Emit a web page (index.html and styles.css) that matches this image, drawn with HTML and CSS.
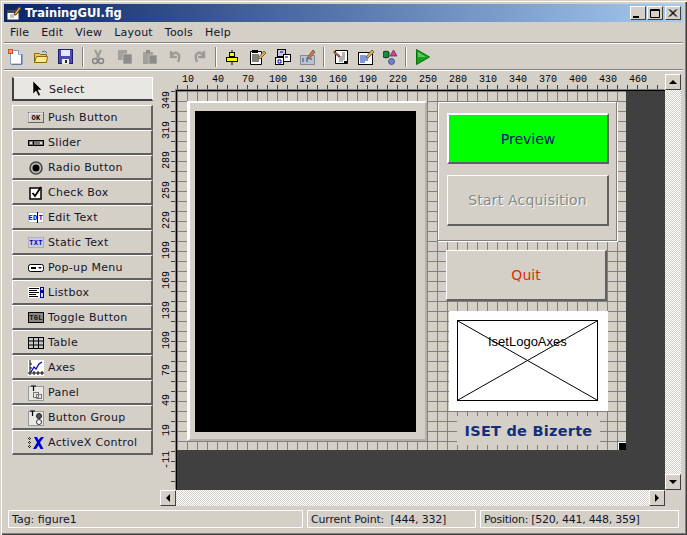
FILE: index.html
```html
<!DOCTYPE html>
<html lang="en">
<head>
  <meta charset="UTF-8" />
  <title>TrainingGUI.fig</title>
  <meta name="viewport" content="width=device-width, initial-scale=1.0" />
  <link rel="stylesheet" href="styles.css">
</head>
<body>
<div class="window">

  <!-- Title bar -->
  <div class="titlebar">
    <svg class="app-icon" width="16" height="16" viewBox="0 0 16 16">
      <rect x="1" y="5" width="12" height="10" fill="#fff" stroke="#333"/>
      <rect x="1" y="5" width="12" height="3" fill="#445"/>
      <path d="M4 10h6M4 12h4" stroke="#88a"/>
      <path d="M8 9 13 2l2 1-5 7z" fill="#e8b040" stroke="#642"/>
    </svg>
    <span class="title">TrainingGUI.fig</span>
    <div class="win-btns">
      <div class="win-btn"><svg width="15" height="13"><rect x="3" y="9" width="6" height="2" fill="#000"/></svg></div>
      <div class="win-btn"><svg width="16" height="13"><path d="M3.5 2.5h9v8h-9z M3 3.5h10" fill="none" stroke="#000"/></svg></div>
      <div class="win-btn close"><svg width="16" height="13"><path d="M4 2.5l7 7M5 2.5l7 7M11 2.5l-7 7M12 2.5l-7 7" stroke="#000"/></svg></div>
    </div>
  </div>

  <!-- Menu -->
  <div class="menubar">
    <span>File</span><span>Edit</span><span>View</span><span>Layout</span><span>Tools</span><span>Help</span>
  </div>

  <!-- Toolbar -->
  <div class="toolbar">
    <div class="tool"><svg width="16" height="16"><path d="M2.500 1.500h8l4 4v9.500h-12z" fill="#fff" stroke="#8aa0c8"/><path d="M10.500 1.500v4h4" fill="#dde6f5" stroke="#8aa0c8"/><path d="M13.500 6v9.500h-10" fill="none" stroke="#5a78b0"/><rect x="0.500" y="0.500" width="4" height="4" fill="#f4a070" stroke="#d05030"/></svg></div>
    <div class="tool"><svg width="16" height="16"><path d="M1.500 4.500h5l1 1h6v8h-12z" fill="#f0c850" stroke="#8a6a10"/><path d="M1.500 13.500l2-6h11l-1 6z" fill="#ffe88a" stroke="#8a6a10"/><path d="M9 3q3-2.500 5 1" fill="none" stroke="#3a6ab0"/></svg></div>
    <div class="tool"><svg width="16" height="16"><rect x="0.500" y="0.500" width="14" height="14" fill="#4a4ab0" stroke="#20206a"/><rect x="3" y="1" width="9" height="6" fill="#e8e8f8"/><rect x="4" y="10" width="7" height="5" fill="#eee"/><rect x="7" y="11" width="2" height="3" fill="#222"/></svg></div>
    <div class="tool-sep"></div>
    <div class="tool"><svg width="16" height="16"><path d="M3 1l4 8M9 1l-4 8" stroke="#9a9a96" stroke-width="2"/><circle cx="3" cy="12" r="2.500" fill="none" stroke="#858581" stroke-width="1.500"/><circle cx="9" cy="12" r="2.500" fill="none" stroke="#858581" stroke-width="1.500"/></svg></div>
    <div class="tool"><svg width="16" height="16"><rect x="1" y="1" width="9" height="10" fill="#a3a19c"/><rect x="6" y="5" width="9" height="10" fill="#8e8c88" stroke="#d4d0c8" stroke-width=".6"/></svg></div>
    <div class="tool"><svg width="16" height="16"><rect x="1" y="3" width="10" height="12" fill="#a3a19c"/><rect x="4" y="1" width="4" height="3" fill="#8e8c88"/><rect x="7" y="6" width="8" height="9" fill="#8e8c88" stroke="#d4d0c8" stroke-width=".6"/></svg></div>
    <div class="tool"><svg width="16" height="16"><path d="M4 2v6h6M4 8q2-5 6-4 4 2 1 9" fill="none" stroke="#9c9a96" stroke-width="2.400"/></svg></div>
    <div class="tool"><svg width="16" height="16"><path d="M12 2v6H6M12 8q-2-5-6-4-4 2-1 9" fill="none" stroke="#9c9a96" stroke-width="2.400"/></svg></div>
    <div class="tool-sep tight"></div>
    <div class="tool"><svg width="16" height="16"><path d="M7 1v15" stroke="#000"/><rect x="4.500" y="3.500" width="5" height="4" fill="#ff0" stroke="#000"/><rect x="1.500" y="8.500" width="11" height="4" fill="#ff0" stroke="#000"/></svg></div>
    <div class="tool"><svg width="16" height="16"><path d="M0.500 2.500h11v13h-11z" fill="#fff" stroke="#000"/><rect x="2" y="1" width="6" height="3" fill="#000"/><path d="M2 6h7M2 8h7M2 10h7M2 12h7" stroke="#000"/><path d="M8 9l6-7 2 2-6 6z" fill="#e8b040" stroke="#664"/></svg></div>
    <div class="tool"><svg width="16" height="16"><rect x="0.500" y="8.500" width="8" height="7" fill="#fff" stroke="#000"/><rect x="2.500" y="0.500" width="8" height="7" fill="#c8c8d8" stroke="#000"/><rect x="8.500" y="5.500" width="7" height="7" fill="#fff" stroke="#000"/><path d="M3 11h3v3H3zM5 3h3M10 8h3" stroke="#00a" fill="none"/></svg></div>
    <div class="tool"><svg width="16" height="16"><rect x="0.500" y="6.500" width="14" height="9" fill="#b8c4d4" stroke="#889"/><path d="M2 10h2M6 10h2M10 10h2M2 12h2M6 12h2" stroke="#248"/><path d="M7 9l6-8 2 2-6 7z" fill="#e87040" stroke="#664"/></svg></div>
    <div class="tool-sep tight"></div>
    <div class="tool"><svg width="16" height="16"><path d="M2.500 1.500h12v13h-12z" fill="#fff" stroke="#000"/><path d="M5 8h7M6 10h6M6 12h4M9 4h3M9 6h3" stroke="#666"/><path d="M1 2l6 5-1 1-5-4z" fill="#e06040" stroke="#844"/><rect x="11" y="12" width="3" height="2" fill="#000"/></svg></div>
    <div class="tool"><svg width="16" height="16"><rect x="0.500" y="3.500" width="14" height="12" fill="#fff" stroke="#000"/><path d="M2 7h6M2 9h8M2 11h8M2 13h5" stroke="#0030c0"/><path d="M8 8l6-7 2 2-6 6z" fill="#e8b040" stroke="#664"/></svg></div>
    <div class="tool"><svg width="16" height="16"><path d="M0 3l3-1 3 1v5l-3 1-3-1z" fill="#109040" stroke="#000" stroke-width=".7"/><path d="M10.500 1l3.500 6H7z" fill="#d040a0" stroke="#602050" stroke-width=".7"/><circle cx="8.500" cy="12.500" r="3" fill="#7080d0" stroke="#303060" stroke-width=".7"/></svg></div>
    <div class="tool-sep tighter"></div>
    <div class="tool"><svg width="16" height="16"><path d="M1.500 0.500v15L14.500 8z" fill="#1aa01a" stroke="#0a700a"/><path d="M3 3v5l8 0z" fill="#5ac85a"/></svg></div>
  </div>

  <div class="main">

    <!-- Component palette -->
    <div class="palette">
      <div class="pal-btn selected">
        <span class="pal-icon"><svg width="16" height="16"><path d="M4 0v13l3-3 2.500 5 2-1-2.500-5h4z" fill="#000" stroke="#fff" stroke-width=".5"/></svg></span>Select
      </div>
      <div class="pal-list">
        <div class="pal-btn"><span class="pal-icon"><svg width="16" height="11"><rect x=".5" y=".5" width="15" height="10" fill="#d4d0c8" stroke="#666"/><path d="M1 1h14M1 1v9" stroke="#fff"/><text x="8" y="8" class="glyph">OK</text></svg></span>Push Button</div>
        <div class="pal-btn"><span class="pal-icon"><svg width="16" height="6"><rect x=".5" y=".5" width="15" height="5" fill="#777" stroke="#000"/><rect x="5" y="1" width="1" height="4" fill="#000"/><rect x="2" y="2" width="2" height="2" fill="#ddd"/><rect x="12" y="2" width="2" height="2" fill="#ddd"/></svg></span>Slider</div>
        <div class="pal-btn"><span class="pal-icon"><svg width="14" height="14"><circle cx="7" cy="7" r="6" fill="#bbb" stroke="#444" stroke-width="1.500"/><circle cx="7" cy="7" r="3.500" fill="#000"/></svg></span>Radio Button</div>
        <div class="pal-btn"><span class="pal-icon"><svg width="14" height="14"><rect x="1" y="2" width="11" height="11" fill="#fff" stroke="#000" stroke-width="1.500"/><path d="M3.500 7l2.500 3 6-9" fill="none" stroke="#000" stroke-width="1.800"/></svg></span>Check Box</div>
        <div class="pal-btn"><span class="pal-icon"><svg width="16" height="11"><rect width="16" height="11" fill="#fff"/><rect x=".5" y=".5" width="15" height="10" fill="none" stroke="#c0c0c0"/><text x="5" y="8" class="glyph blue">ED</text><text x="13" y="8" class="glyph blue">T</text><path d="M9.500 0v11" stroke="#000"/></svg></span>Edit Text</div>
        <div class="pal-btn"><span class="pal-icon"><svg width="16" height="11"><rect width="16" height="11" fill="#c8ccdc" stroke="#999"/><text x="8" y="8" class="glyph blue">TXT</text></svg></span>Static Text</div>
        <div class="pal-btn"><span class="pal-icon"><svg width="16" height="8"><rect x=".5" y=".5" width="15" height="7" rx="2" fill="#fff" stroke="#000"/><rect x="3" y="3" width="5" height="2" fill="#000"/><path d="M10 3h4l-2 2z" fill="#000"/></svg></span>Pop-up Menu</div>
        <div class="pal-btn"><span class="pal-icon"><svg width="16" height="11"><rect width="16" height="11" fill="#fff"/><path d="M1 1.500h10M1 3.500h8M1 5.500h10M1 7.500h7M1 9.500h9" stroke="#000"/><rect x="12.500" y=".5" width="3" height="10" fill="#dde" stroke="#00a"/><rect x="13" y="3" width="2" height="3" fill="#00a"/></svg></span>Listbox</div>
        <div class="pal-btn"><span class="pal-icon"><svg width="16" height="11"><rect x=".5" y=".5" width="15" height="10" fill="#888" stroke="#000"/><text x="8" y="8" class="glyph dark">TGL</text></svg></span>Toggle Button</div>
        <div class="pal-btn"><span class="pal-icon"><svg width="16" height="12"><rect x=".5" y=".5" width="15" height="11" fill="#c8c8c8" stroke="#000"/><path d="M.5 4h15M.5 8h15M5.500 1v10M10.500 1v10" stroke="#000"/></svg></span>Table</div>
        <div class="pal-btn"><span class="pal-icon"><svg width="16" height="16"><rect width="16" height="16" fill="#fff"/><path d="M2 0v15M0 13h16M2 4h2M2 8h2M6 11v4M10 11v4M14 11v4" stroke="#000"/><path d="M3 12l3-5 2 2 3-5 3-2" fill="none" stroke="#00c" stroke-width="1.300"/></svg></span>Axes</div>
        <div class="pal-btn"><span class="pal-icon"><svg width="16" height="16"><rect x=".5" y="1.500" width="15" height="14" fill="#e8e8e4" stroke="#999"/><rect x="5.500" y="7.500" width="5" height="5" fill="none" stroke="#777"/><rect x="8.500" y="9.500" width="5" height="4" fill="none" stroke="#777"/><path d="M3 1h5M5.500 1v5" stroke="#000" stroke-width="1.200"/></svg></span>Panel</div>
        <div class="pal-btn"><span class="pal-icon"><svg width="16" height="16"><rect x=".5" y="1.500" width="15" height="14" fill="#e8e8e4" stroke="#999"/><path d="M2 1h5M4.500 1v5" stroke="#000" stroke-width="1.200"/><circle cx="11" cy="6" r="2.500" fill="#555" stroke="#222"/><circle cx="11" cy="12" r="2.500" fill="#fff" stroke="#333"/></svg></span>Button Group</div>
        <div class="pal-btn"><span class="pal-icon"><svg width="16" height="12"><path d="M0 1.500h4M0 5.500h4M0 9.500h4M1.500 0v11" stroke="#222" stroke-dasharray="1 1"/><path d="M6 0h3l1.500 3L13 0h3l-4 5.500 3.500 6.500h-3l-2-3.500L8 12H5l4-6.500z" fill="#0000d0"/></svg></span>ActiveX Control</div>
      </div>
    </div>

    <!-- Layout editor -->
    <div class="editor">
      <div class="corner"></div>
      <div class="ruler-top">
        <span>10</span><span>40</span><span>70</span><span>100</span><span>130</span><span>160</span><span>190</span><span>220</span><span>250</span><span>280</span><span>310</span><span>340</span><span>370</span><span>400</span><span>430</span><span>460</span>
      </div>
      <div class="vscroll">
        <div class="sb-btn"><div class="arrow up"></div></div>
        <div class="sb-track"></div>
        <div class="sb-btn"><div class="arrow down"></div></div>
      </div>
      <div class="ruler-left">
        <span>349</span><span>319</span><span>289</span><span>259</span><span>229</span><span>199</span><span>169</span><span>139</span><span>109</span><span>79</span><span>49</span><span>19</span><span>-11</span>
      </div>
      <div class="viewport">
        <div class="canvas">
          <div class="axes-panel"><div class="axes-black"></div></div>
          <div class="btn-panel"></div>
          <div class="ui-btn preview">Preview</div>
          <div class="ui-btn acquire">Start Acquisition</div>
          <div class="ui-btn quit">Quit</div>
          <div class="logo-axes">
            <div class="logo-box">
              <svg class="logo-cross" width="139" height="79"><path d="M0 0 139 79M139 0 0 79" stroke="#000"/></svg>
              <span class="logo-name">IsetLogoAxes</span>
            </div>
          </div>
          <div class="iset-label">ISET de Bizerte</div>
          <div class="handle"></div>
        </div>
      </div>
      <div class="hscroll">
        <div class="sb-btn"><div class="arrow left"></div></div>
        <div class="sb-track"></div>
        <div class="sb-btn"><div class="arrow right"></div></div>
      </div>
    </div>
  </div>

  <!-- Status bar -->
  <div class="statusbar">
    <div class="stat tag">Tag: figure1</div>
    <div class="stat point">Current Point:&nbsp; [444, 332]</div>
    <div class="stat pos">Position: [520, 441, 448, 359]</div>
  </div>
</div>
</body>
</html>
```

FILE: styles.css
```css
* {
  margin: 0;
  padding: 0;
  box-sizing: border-box;
}

body {
  width: 687px;
  height: 535px;
  overflow: hidden;
  background: #d4d0c8;
  font-family: 'DejaVu Sans', Verdana, sans-serif;
  font-size: 11px;
  color: #14142a;
}

.window {
  width: 687px;
  height: 535px;
  padding: 4px;
  background: #d4d0c8;
  box-shadow: inset 1px 1px 0 #d4d0c8, inset 2px 2px 0 #fff, inset -1px -1px 0 #404040, inset -2px -2px 0 #808080;
  display: flex;
  flex-direction: column;
}

/* title bar */
.titlebar {
  height: 18px;
  display: flex;
  align-items: center;
  flex: none;
  padding: 0 2px;
  background: linear-gradient(to right, #0a246a, #a6caf0);
}

.app-icon {
  flex: none;
}

.title {
  margin-left: 3px;
  color: white;
  font-weight: bold;
  font-size: 11.500px;
}

.win-btns {
  margin-left: auto;
  display: flex;
  gap: 1px;
}

.win-btn {
  width: 16px;
  height: 14px;
  background: #d4d0c8;
  border: 1px solid;
  border-color: #fff #404040 #404040 #fff;
  line-height: 0;
}

.win-btn svg {
  margin: 0 0 0 -1px;
}

.close {
  margin-left: 1px;
}

/* menu */
.menubar {
  height: 21px;
  flex: none;
  display: flex;
  align-items: center;
  gap: 12px;
  padding: 1px 0 0 6px;
  letter-spacing: 0.2px;
  border-bottom: 1px solid #808080;
}

/* toolbar */
.toolbar {
  height: 27px;
  flex: none;
  display: flex;
  align-items: center;
  padding-left: 4px;
  border-top: 1px solid #fff;
  border-bottom: 1px solid #808080;
}

.tool {
  width: 25px;
  height: 16px;
  line-height: 0;
}

.tool-sep {
  width: 2px;
  height: 20px;
  margin: 0 8px 0 -1px;
  background: linear-gradient(to right, #808080 1px, #fff 1px);
}

.tight {
  margin-left: -2px;
}

.tighter {
  margin-left: -3px;
}

/* main area */
.main {
  height: 437px;
  flex: none;
  display: flex;
  border-top: 1px solid #fff;
  padding-left: 8px;
}

.palette {
  width: 141px;
  padding-top: 6px;
  flex: none;
}

.pal-btn {
  height: 25px;
  display: flex;
  align-items: center;
  padding: 1px 0 0 13px;
  letter-spacing: 0.3px;
  background: #d4d0c8;
  border: 2px solid;
  border-color: #fff #606060 #606060 #fff;
  border-top-width: 1px;
  border-left-width: 1px;
}

.selected {
  height: 24px;
  background: #e8e6e1;
  border-color: #fff #fff #404040 #404040;
  border-width: 1px 1px 2px 2px;
  margin-bottom: 4px;
}

.pal-icon {
  width: 20px;
  margin-right: 2px;
  display: flex;
  justify-content: center;
  flex: none;
  line-height: 0;
}

.glyph {
  font-family: 'Liberation Mono', monospace;
  font-size: 7px;
  font-weight: bold;
  text-anchor: middle;
  fill: #000;
}

.blue {
  fill: #0000c8;
}

.dark {
  fill: #111;
}

/* editor grid */
.editor {
  width: 522px;
  margin-left: 7px;
  display: grid;
  grid-template-columns: 16px 489px 16px;
  grid-template-rows: 18px 400px 16px;
  padding-top: 1px;
  height: 436px;
}

.corner {
  grid-column: 1;
}

.ruler-top {
  grid-column: 2;
  display: flex;
  overflow: hidden;
  font-family: 'Liberation Mono', monospace;
  font-size: 10px;
  color: #000;
  background: linear-gradient(to right, #404040 1px, transparent 1px) 1px 13px / 10px 5px repeat-x;
}

.ruler-top span {
  width: 30px;
  flex: none;
  text-align: center;
  line-height: 11px;
  margin-top: 2px;
  position: relative;
  left: -3px;
}

.vscroll {
  grid-column: 3;
  grid-row: 1 / span 2;
  display: flex;
  flex-direction: column;
  padding-top: 2px;
}

.ruler-left {
  grid-row: 2;
  grid-column: 1;
  display: flex;
  flex-direction: column;
  overflow: hidden;
  height: 400px;
  font-family: 'Liberation Mono', monospace;
  font-size: 10px;
  color: #000;
  background: linear-gradient(to bottom, #404040 1px, transparent 1px) 11px 11px / 5px 10px repeat-y;
}

.ruler-left span {
  height: 30px;
  flex: none;
  width: 12px;
  writing-mode: vertical-rl;
  transform: rotate(180deg);
  text-align: center;
  line-height: 12px;
  position: relative;
  top: -5px;
  left: 1px;
}

.viewport {
  grid-column: 2;
  grid-row: 2;
  height: 400px;
  background: #404040;
  border-left: 1px solid #000;
  border-top: 1px solid #000;
  box-shadow: -1px -1px 0 #808080;
}

/* design canvas, widgets sit at their figure coordinates */
.canvas {
  position: relative;
  width: 449px;
  height: 359px;
  background-color: #d4d0c8;
  background-image:
    linear-gradient(to right, #808080 1px, transparent 1px),
    linear-gradient(to bottom, #808080 1px, transparent 1px);
  background-size: 10px 10px;
}

.axes-panel {
  position: absolute;
  left: 10px;
  top: 10px;
  width: 240px;
  height: 340px;
  padding: 8px 10px 0 5px;
  background: #d4d0c8;
  border: solid;
  border-width: 2px 2px 2px 3px;
  border-color: #fff #b4b1aa #b4b1aa #fff;
}

.axes-black {
  width: 221px;
  height: 321px;
  background: #000;
}

.btn-panel {
  position: absolute;
  left: 260px;
  top: 10px;
  width: 180px;
  height: 140px;
  background: #d4d0c8;
  border: 1px solid #808080;
  box-shadow: inset 1px 1px 0 #fff, 1px 1px 0 #fff;
}

.ui-btn {
  position: absolute;
  display: flex;
  align-items: center;
  justify-content: center;
  font-size: 14px;
  background: #d4d0c8;
  border: 2px solid;
  border-color: #fff #606060 #606060 #fff;
  border-top-width: 1px;
  border-left-width: 1px;
}

.preview {
  left: 270px;
  top: 22px;
  width: 162px;
  height: 51px;
  background: #00ff00;
  border-width: 2px;
  color: #14146e;
}

.acquire {
  left: 270px;
  top: 84px;
  width: 162px;
  height: 51px;
  color: #888;
  letter-spacing: 0.2px;
  text-shadow: 1px 1px 0 #fff;
}

.quit {
  left: 269px;
  top: 159px;
  width: 161px;
  height: 51px;
  color: #d83000;
}

.logo-axes {
  position: absolute;
  left: 272px;
  top: 220px;
  width: 159px;
  height: 100px;
  padding: 9px 0 0 8px;
  background: #fff;
}

.logo-box {
  position: relative;
  width: 141px;
  height: 81px;
  border: 1px solid #000;
}

.logo-cross {
  display: block;
}

.logo-name {
  position: absolute;
  left: 30px;
  top: 13px;
  font-family: 'Liberation Sans', Arial, sans-serif;
  font-size: 13px;
  color: #000;
}

.iset-label {
  position: absolute;
  left: 280px;
  top: 325px;
  width: 143px;
  height: 29px;
  display: flex;
  align-items: center;
  justify-content: center;
  background: #d4d0c8;
  font-weight: bold;
  font-size: 14.500px;
  letter-spacing: 0.25px;
  color: #12307a;
}

.handle {
  position: absolute;
  right: 0;
  bottom: 0;
  width: 8px;
  height: 8px;
  background: #000;
  border: solid #fff;
  border-width: 1px 0 0 1px;
}

/* scrollbars */
.hscroll {
  grid-column: 1 / span 2;
  grid-row: 3;
  display: flex;
}

.sb-btn {
  width: 16px;
  height: 16px;
  flex: none;
  display: flex;
  align-items: center;
  justify-content: center;
  background: #d4d0c8;
  border: 1px solid;
  border-color: #fff #404040 #404040 #fff;
}

.sb-track {
  flex: 1;
  background: repeating-conic-gradient(#fff 0 25%, #d4d0c8 0 50%) 0 0 / 2px 2px;
}

.arrow {
  width: 0;
  height: 0;
  border: 4px solid transparent;
}

.up {
  border-top-width: 0;
  border-bottom-color: #000;
}

.down {
  border-bottom-width: 0;
  border-top-color: #000;
}

.left {
  border-left-width: 0;
  border-right-color: #000;
}

.right {
  border-right-width: 0;
  border-left-color: #000;
}

/* status bar */
.statusbar {
  height: 18px;
  display: flex;
  flex: none;
  margin: 3px 0 0 4px;
}

.stat {
  height: 18px;
  line-height: 18px;
  padding-left: 3px;
  border: 1px solid #fff;
  white-space: nowrap;
  letter-spacing: -0.2px;
}

.tag {
  width: 295px;
  letter-spacing: 0;
}

.point {
  width: 169px;
  margin-left: 4px;
}

.pos {
  width: 199px;
  margin-left: 4px;
  letter-spacing: -0.27px;
}
```
